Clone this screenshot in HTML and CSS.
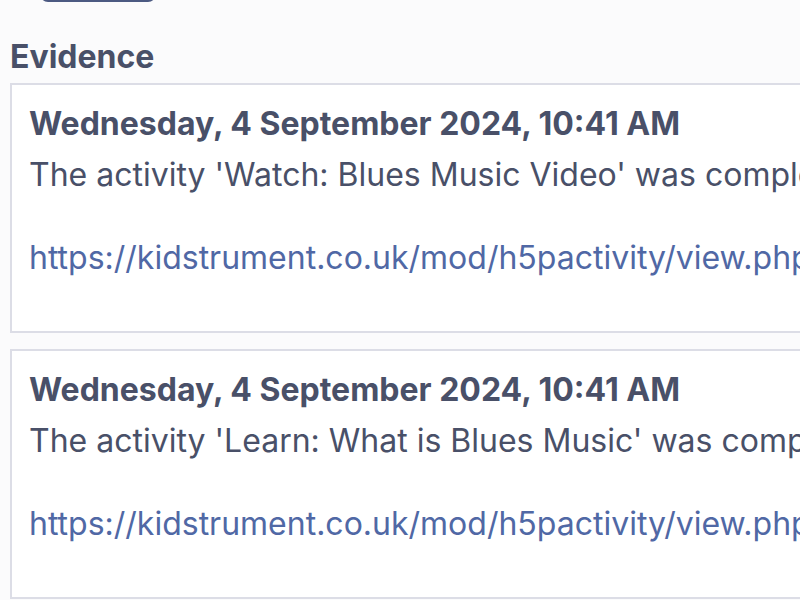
FILE: index.html
```html
<!DOCTYPE html>
<html lang="en">

<head>
    <meta charset="UTF-8">
    <meta name="viewport" content="width=device-width, initial-scale=1.0">
    <title>Evidence</title>
    <link rel="stylesheet" href="styles.css">
</head>

<body>

    <div class="page">
        <a class="btn" href="#"></a>

        <h3 class="section-title">Evidence</h3>

        <div class="evidence">
            <h4>Wednesday, 4 September 2024, 10:41 AM</h4>
            <p>The activity 'Watch: Blues Music Video' was completed.<br><br><a href="#">https://kidstrument.co.uk/mod/h5pactivity/view.php?id=1234</a></p>
        </div>

        <div class="evidence">
            <h4>Wednesday, 4 September 2024, 10:41 AM</h4>
            <p>The activity 'Learn: What is Blues Music' was completed.<br><br><a href="#">https://kidstrument.co.uk/mod/h5pactivity/view.php?id=1233</a></p>
        </div>
    </div>

</body>

</html>
```

FILE: styles.css
```css
html,
body {
    overflow: hidden;
}

body {
    font-family: Inter, "Noto Sans", sans-serif;
    margin: 0;
    background: #fbfbfc;
    color: #495068;
}

.page {
    display: flex;
    flex-direction: column;
    padding-left: 10px;
    width: 1400px;
}

.btn {
    box-sizing: border-box;
    width: 116px;
    height: 40px;
    margin: -38px 0 0 30px;
    border: 2px solid #4c5a82;
    border-radius: 8px;
}

.section-title {
    font-size: 32px;
    font-weight: 700;
    line-height: 1.2;
    margin: 36px 0 7px;
}

.evidence {
    background: #fff;
    border: 2px solid #dcdde6;
    padding: 20px 17px 32px;
    margin-bottom: 16px;
}

.evidence h4 {
    font-size: 32px;
    font-weight: 700;
    line-height: 1.2;
    margin: 0 0 10px;
}

.evidence p {
    font-size: 32px;
    line-height: 41.5px;
    margin: 0 0 21px;
    white-space: nowrap;
}

.evidence a {
    color: #5068a5;
    text-decoration: none;
}
```
